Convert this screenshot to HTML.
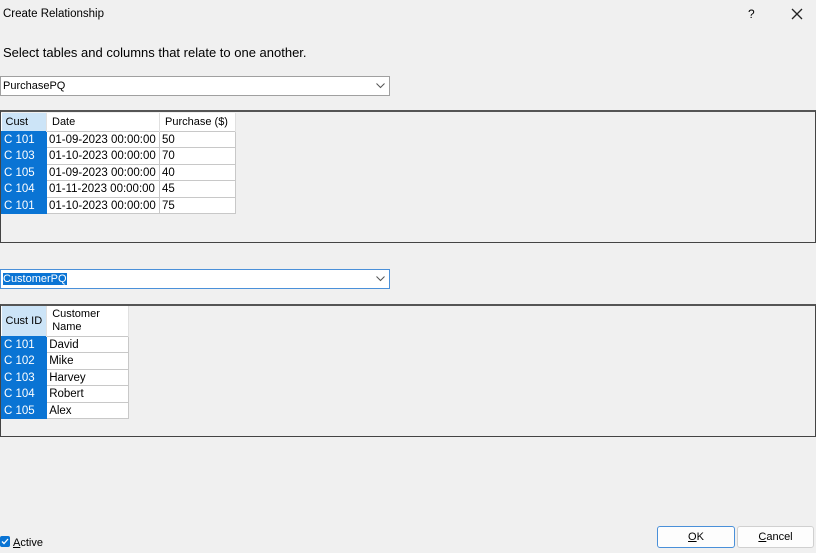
<!DOCTYPE html>
<html><head><style>
*{margin:0;padding:0;box-sizing:border-box}
body{width:816px;height:553px;background:#f0f0f0;font-family:"Liberation Sans",sans-serif;font-size:11px;color:#000;position:relative;overflow:hidden}
.a{position:absolute}
.combo{background:#fff;border:1px solid #a0a0a0;height:20px;padding:3px 2px;font-size:11px}
.box{border:1px solid #444;border-top:2px solid #555;background:#f0f0f0}
table{border-collapse:collapse;position:absolute;background:#fff}
td{border:1px solid #c8c8c8;padding:1px 2px 0;height:16.5px;font-size:11.5px;white-space:nowrap;line-height:14px}
td.k{background:#0a74d4;color:#fff;border-color:#0a74d4}
th{font-weight:normal;text-align:left;padding:0 5px;border-right:1px solid #e0e0e0;height:18px;font-size:11px;white-space:nowrap}
th.k{background:#cce4f7;padding:0 4px}
.btn{position:absolute;height:22px;background:#fdfdfd;border:1px solid #d0d0d0;border-radius:3px;text-align:center;line-height:20px;font-size:11px}
</style></head><body>
<div class="a" style="left:3px;top:8px;font-size:11.5px">Create Relationship</div>
<div class="a" style="left:748px;top:7px;font-size:12px">?</div>
<svg class="a" style="left:791px;top:8px" width="12" height="12"><path d="M1 1L11 11M11 1L1 11" stroke="#222" stroke-width="1.3"/></svg>
<div class="a" style="left:3px;top:45px;font-size:13px">Select tables and columns that relate to one another.</div>
<div class="a combo" style="left:0;top:76px;width:390px">PurchasePQ</div>
<svg class="a" style="left:376px;top:83px" width="9" height="6"><path d="M0.5 0.5L4.5 4.5L8.5 0.5" stroke="#555" fill="none"/></svg>
<div class="a box" style="left:0;top:110px;width:816px;height:133px"></div>
<table style="left:1px;top:113px">
<tr><th class="k" style="width:45px;height:18px">Cust</th><th style="width:113px">Date</th><th style="width:76px">Purchase ($)</th></tr>
<tr><td class="k">C 101</td><td>01-09-2023 00:00:00</td><td>50</td></tr>
<tr><td class="k">C 103</td><td>01-10-2023 00:00:00</td><td>70</td></tr>
<tr><td class="k">C 105</td><td>01-09-2023 00:00:00</td><td>40</td></tr>
<tr><td class="k">C 104</td><td>01-11-2023 00:00:00</td><td>45</td></tr>
<tr><td class="k">C 101</td><td>01-10-2023 00:00:00</td><td>75</td></tr>
</table>
<div class="a combo" style="left:0;top:269px;width:390px;border-color:#4a90d9"><span style="background:#0a74d4;color:#fff">CustomerPQ</span></div>
<svg class="a" style="left:376px;top:276px" width="9" height="6"><path d="M0.5 0.5L4.5 4.5L8.5 0.5" stroke="#555" fill="none"/></svg>
<div class="a box" style="left:0;top:304px;width:816px;height:133px"></div>
<table style="left:1px;top:306px">
<tr><th class="k" style="width:45px;height:30px">Cust ID</th><th style="width:82px;line-height:13px;white-space:normal">Customer<br>Name</th></tr>
<tr><td class="k">C 101</td><td>David</td></tr>
<tr><td class="k">C 102</td><td>Mike</td></tr>
<tr><td class="k">C 103</td><td>Harvey</td></tr>
<tr><td class="k">C 104</td><td>Robert</td></tr>
<tr><td class="k">C 105</td><td>Alex</td></tr>
</table>
<div class="a" style="left:0;top:536px;width:10px;height:11px;background:#0a74d4;border-radius:2px"></div>
<svg class="a" style="left:1px;top:538px" width="8" height="7"><path d="M1 3.5L3 5.5L7 1" stroke="#fff" fill="none" stroke-width="1.3"/></svg>
<div class="a" style="left:13px;top:537px"><u>A</u>ctive</div>
<div class="btn" style="left:657px;top:526px;width:78px;border-color:#4a90d9"><u>O</u>K</div>
<div class="btn" style="left:737px;top:526px;width:77px"><u>C</u>ancel</div>
</body></html>
